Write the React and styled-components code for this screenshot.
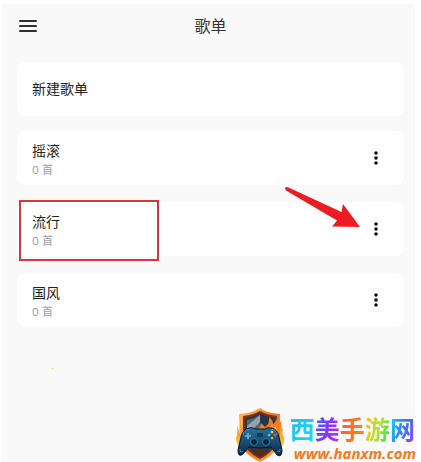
import React from "react"
import styled, { createGlobalStyle } from "styled-components"

const playlists = [
  { name: "摇滚", count: 0 },
  { name: "流行", count: 0, marked: true },
  { name: "国风", count: 0 },
]

const App = () => (
  <>
    <GlobalStyle />
    <Screen>
      <Header>
        <IconButton type="button" aria-label="菜单">
          <svg width="18" height="14" viewBox="0 0 18 14">
            <path
              d="M1 2h16M1 7h16M1 12h16"
              stroke="#2b2f30"
              strokeWidth="2"
              strokeLinecap="round"
            />
          </svg>
        </IconButton>
        <Title>歌单</Title>
      </Header>
      <CreateButton type="button">新建歌单</CreateButton>
      <List>
        {playlists.map(({ name, count, marked }) => (
          <Row key={name}>
            <Info>
              <Name>{name}</Name>
              <Count>{count} 首</Count>
            </Info>
            <IconButton type="button" aria-label={`${name} 更多`}>
              <svg width="6" height="14" viewBox="0 0 6 14" fill="#111">
                <circle cx="3" cy="2" r="1.8" />
                <circle cx="3" cy="7" r="1.8" />
                <circle cx="3" cy="12" r="1.8" />
              </svg>
            </IconButton>
            {marked && <Outline />}
            {marked && <Arrow />}
          </Row>
        ))}
      </List>
      <Speck />
      <Watermark>
        <Shield />
        <div>
          <SiteName>
            <Glyph $fill="linear-gradient(110deg, #22b8f8, #10e0f4)">西</Glyph>
            <Glyph $fill="linear-gradient(110deg, #3a5cff 10%, #9a2cf5 60%, #c03af0)">美</Glyph>
            <Glyph $fill="linear-gradient(110deg, #ff5a2a, #ff8a14)">手</Glyph>
            <Glyph $fill="linear-gradient(110deg, #ffb020, #b4e81e 50%, #18dc7c)">游</Glyph>
            <Glyph $fill="linear-gradient(110deg, #18d4f0, #2c7cff 50%, #a03aff)">网</Glyph>
          </SiteName>
          <Url href="#">www.hanxm.com</Url>
        </div>
      </Watermark>
    </Screen>
  </>
)

const Arrow = () => (
  <ArrowSvg viewBox="0 0 76 42" width="76" height="42" aria-hidden="true">
    <path
      d="M1 2.4Q1.4 .6 4 1.2L57.5 26 59 18 76 41 48 40.5 53 34.5 2 4.5Z"
      fill="#ec1c24"
    />
  </ArrowSvg>
)

const Shield = () => (
  <svg width="50" height="54" viewBox="0 0 50 54" aria-hidden="true">
    <defs>
      <linearGradient id="rim" x1="0" y1="0" x2="1" y2="1">
        <stop offset="0" stopColor="#ffc060" />
        <stop offset=".5" stopColor="#f27420" />
        <stop offset="1" stopColor="#ffb038" />
      </linearGradient>
      <linearGradient id="fire" x1="0" y1="0" x2="0" y2="1">
        <stop offset="0" stopColor="#ff7a18" />
        <stop offset="1" stopColor="#ffd045" />
      </linearGradient>
      <linearGradient id="pad" x1="0" y1="0" x2="0" y2="1">
        <stop offset="0" stopColor="#28719f" />
        <stop offset="1" stopColor="#0b2742" />
      </linearGradient>
    </defs>
    <path
      d="M2 18Q4 22 5 26L6 40Q1 37 1 30Q3 26 2 18ZM47 12Q45 18 48 22Q46 25 49 29Q50 37 44 42L43 17Z"
      fill="url(#fire)"
    />
    <path
      d="M25 0Q31 5 45 6L45 30Q44 45 25 54Q6 45 5 30L4 6Q18 5 25 0Z"
      fill="url(#rim)"
    />
    <path
      d="M25 3Q32 7 42 8L42 30Q41 43 25 51Q9 43 8 30L8 8Q18 7 25 3Z"
      fill="#7c3216"
    />
    <path d="M25 5Q31 9 40 10L40 30Q39 42 25 49Q11 42 10 30L10 10Q19 9 25 5Z" fill="#26384d" />
    <path d="M25 7Q19 11 12 12L12 30 25 28Z" fill="#52657a" />
    <path d="M25 7 25 14 12 27 12 18Z" fill="#94a3ae" />
    <path
      d="M20 24Q25 21 26 15Q28 17 30 19Q35 16 34 9Q38 12 38 16Q41 14 43 8L45 28 25 26Z"
      fill="#f9781a"
    />
    <path d="M25 25Q29 24 29 20L32 22Q37 19 37 16L38 21 41 18 42 28Z" fill="#ffc240" />
    <path d="M17 44 25 40 33 44 25 49Z" fill="#5a2c1a" />
    <path
      d="M14 20Q18 19 20 21L30 21Q32 19 37 20Q42 21 44 29L47 42Q47 50 42 47L36 39Q25 41 14 39L8 46Q3 50 3 42L6 29Q8 21 14 20Z"
      fill="url(#pad)"
      stroke="#071625"
    />
    <path
      d="M8 27Q9 22 14 21.5M37 21.5Q41 22 42 27M5 41Q5 46 8 43M45 41Q45 46 42 43"
      fill="none"
      stroke="#3b94c4"
    />
    <circle cx="19" cy="34" r="3.5" fill="#0a243b" stroke="#2583b8" />
    <circle cx="31" cy="34" r="3.5" fill="#0a243b" stroke="#2583b8" />
    <path d="M13 25v6M10 28h6" stroke="#5aa8cc" strokeWidth="2" />
    <path d="M22 25h6v4h-6Z" fill="#123a59" />
    <circle cx="37" cy="24" r="1.3" fill="#ffd34d" />
    <circle cx="40" cy="27" r="1.3" fill="#ff5038" />
    <circle cx="34" cy="27" r="1.3" fill="#53c8ff" />
    <circle cx="37" cy="30" r="1.3" fill="#ff9d2e" />
  </svg>
)

export default App

const GlobalStyle = createGlobalStyle`
  body {
    margin: 0;
    background: #fff;
    font-family: "Noto Sans", "Noto Sans CJK SC", sans-serif;
  }
`

const Screen = styled.main`
  position: relative;
  box-sizing: border-box;
  min-height: calc(100vh - 4px);
  margin: 4px 6px 0 2px;
  padding: 0 11px 0 15px;
  background: #f9f9f9;
`

const Header = styled.header`
  display: grid;
  grid-template-columns: 22px 1fr 22px;
  align-items: center;
  height: 44px;
  margin-bottom: 14px;
`

const IconButton = styled.button`
  display: flex;
  justify-content: center;
  width: 22px;
  padding: 4px 0;
  border: 0;
  background: none;
`

const Title = styled.h1`
  margin: 0;
  color: #333;
  font-size: 16px;
  line-height: 24px;
  font-weight: 400;
  text-align: center;
`

const CreateButton = styled.button`
  display: block;
  width: 100%;
  height: 54px;
  padding: 0 15px 2px;
  border: 0;
  border-radius: 8px;
  background: #fff;
  color: #222;
  font: inherit;
  font-size: 14px;
  text-align: left;
`

const List = styled.ul`
  display: flex;
  flex-direction: column;
  gap: 17px;
  margin: 15px 0 0;
  padding: 0;
  list-style: none;
`

const Row = styled.li`
  position: relative;
  display: flex;
  align-items: center;
  justify-content: space-between;
  height: 54px;
  padding: 0 17px 0 15px;
  border-radius: 8px;
  background: #fff;
`

const Info = styled.div`
  padding-top: 2px;
`

const Name = styled.div`
  color: #222;
  font-size: 14px;
  line-height: 22px;
`

const Count = styled.div`
  color: #a0a0a0;
  font-family: Inter, "Noto Sans CJK SC", sans-serif;
  font-size: 11px;
  line-height: 16px;
`

const Outline = styled.div`
  position: absolute;
  top: -2px;
  left: 2px;
  box-sizing: border-box;
  width: 140px;
  height: 61px;
  border: 2px solid #cf3a3a;
`

const ArrowSvg = styled.svg`
  position: absolute;
  top: -16px;
  right: 44px;
`

const Speck = styled.i`
  position: absolute;
  top: 364px;
  left: 50px;
  width: 1px;
  height: 1px;
  background: #d0c840;
`

const Watermark = styled.footer`
  position: absolute;
  right: -1px;
  bottom: 0;
  display: flex;
  align-items: flex-end;
  gap: 5px;
`

const SiteName = styled.div`
  display: flex;
  font-family: "Liberation Sans", "Noto Sans CJK SC", sans-serif;
  font-size: 25px;
  line-height: 28px;
  font-weight: 700;
`

const Glyph = styled.span`
  background: ${props => props.$fill};
  background-clip: text;
  color: transparent;
`

const Url = styled.a`
  display: block;
  margin-left: 4px;
  color: #f47920;
  font-family: "Open Sans", sans-serif;
  font-size: 15px;
  line-height: 18px;
  font-style: italic;
  font-weight: 700;
  text-decoration: none;
`
